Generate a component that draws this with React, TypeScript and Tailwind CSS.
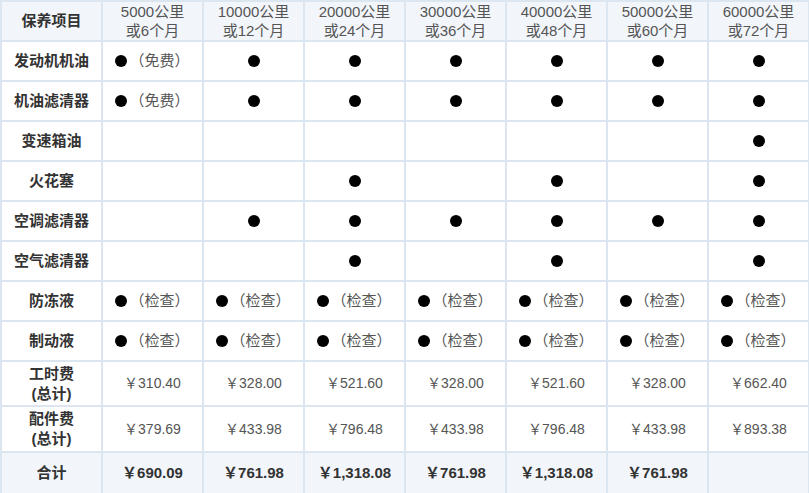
const cols = [
  ["5000公里", "或6个月"],
  ["10000公里", "或12个月"],
  ["20000公里", "或24个月"],
  ["30000公里", "或36个月"],
  ["40000公里", "或48个月"],
  ["50000公里", "或60个月"],
  ["60000公里", "或72个月"],
];

// "d" = dot, "f" = dot + 免费, "c" = dot + 检查, "" = empty
const items: [string, string[]][] = [
  ["发动机机油", ["f", "d", "d", "d", "d", "d", "d"]],
  ["机油滤清器", ["f", "d", "d", "d", "d", "d", "d"]],
  ["变速箱油", ["", "", "", "", "", "", "d"]],
  ["火花塞", ["", "", "d", "", "d", "", "d"]],
  ["空调滤清器", ["", "d", "d", "d", "d", "d", "d"]],
  ["空气滤清器", ["", "", "d", "", "d", "", "d"]],
  ["防冻液", ["c", "c", "c", "c", "c", "c", "c"]],
  ["制动液", ["c", "c", "c", "c", "c", "c", "c"]],
];

const labor = ["310.40", "328.00", "521.60", "328.00", "521.60", "328.00", "662.40"];
const parts = ["379.69", "433.98", "796.48", "433.98", "796.48", "433.98", "893.38"];
const totals = ["690.09", "761.98", "1,318.08", "761.98", "1,318.08", "761.98", ""];

const font = { fontFamily: '"Liberation Sans", "Noto Sans CJK SC", sans-serif' };

function Dot() {
  return <span className="inline-block w-[12px] h-[12px] rounded-full bg-black align-[-1px]" />;
}

function Mark({ kind }: { kind: string }) {
  if (!kind) return null;
  if (kind === "d") return <Dot />;
  return (
    <span className="text-[15px] text-[#555] whitespace-nowrap">
      <Dot />
      <span className="ml-[2px]">（{kind === "f" ? "免费" : "检查"}）</span>
    </span>
  );
}

export default function App() {
  const cell = "border-2 border-[#dce6f1] text-center align-middle p-0";
  return (
    <div className="w-[809px] h-[493px] bg-white overflow-hidden" style={font}>
      <table className="w-[809px] table-fixed border-collapse">
        <colgroup>
          {Array.from({ length: 8 }).map((_, i) => (
            <col key={i} className="w-[101px]" />
          ))}
        </colgroup>
        <thead>
          <tr className="h-[40px] bg-[#f2f6fb]">
            <th className={`${cell} text-[15px] font-bold text-[#333]`}>保养项目</th>
            {cols.map(([a, b]) => (
              <th key={a} className={`${cell} text-[15px] font-normal text-[#555] leading-[19px]`}>
                <div>{a}</div>
                <div>{b}</div>
              </th>
            ))}
          </tr>
        </thead>
        <tbody>
          {items.map(([name, marks]) => (
            <tr key={name} className="h-[40px]">
              <td className={`${cell} text-[15px] font-bold text-[#333]`}>{name}</td>
              {marks.map((m, i) => (
                <td key={i} className={cell}>
                  <Mark kind={m} />
                </td>
              ))}
            </tr>
          ))}
          <tr className="h-[45px]">
            <td className={`${cell} text-[15px] font-bold text-[#333] leading-[20px]`}>
              <div>工时费</div>
              <div>(总计)</div>
            </td>
            {labor.map((v, i) => (
              <td key={i} className={`${cell} text-[14px] text-[#555]`}>
                ￥{v}
              </td>
            ))}
          </tr>
          <tr className="h-[46px]">
            <td className={`${cell} text-[15px] font-bold text-[#333] leading-[20px]`}>
              <div>配件费</div>
              <div>(总计)</div>
            </td>
            {parts.map((v, i) => (
              <td key={i} className={`${cell} text-[14px] text-[#555]`}>
                ￥{v}
              </td>
            ))}
          </tr>
          <tr className="h-[42px] bg-[#f2f6fb]">
            <td className={`${cell} text-[15px] font-bold text-[#333]`}>合计</td>
            {totals.map((v, i) => (
              <td key={i} className={`${cell} text-[15px] font-bold text-[#333]`}>
                {v ? `￥${v}` : ""}
              </td>
            ))}
          </tr>
        </tbody>
      </table>
    </div>
  );
}
